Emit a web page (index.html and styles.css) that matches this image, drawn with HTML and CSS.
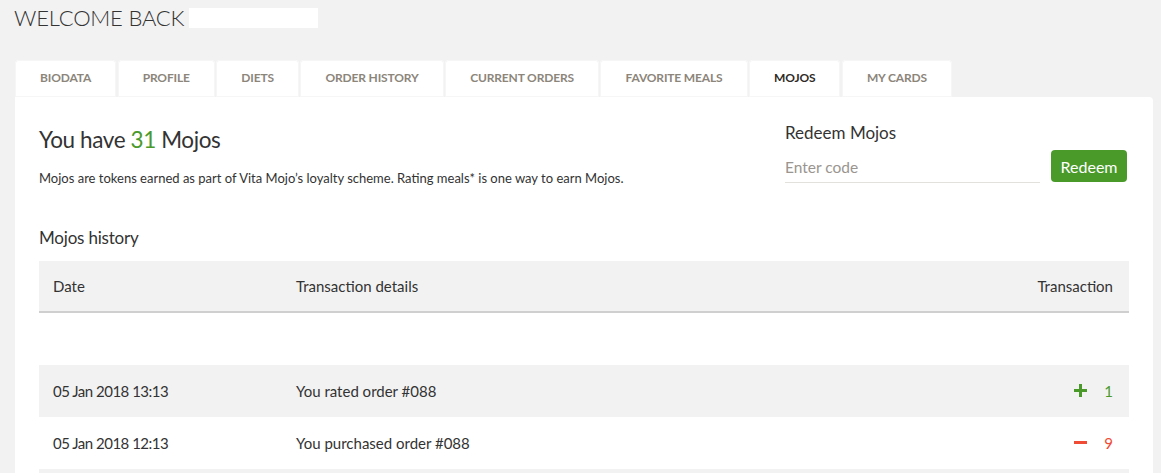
FILE: index.html
```html
<!DOCTYPE html>
<html lang="en">
<head>
<meta charset="utf-8">
<title>Mojos</title>
<link rel="stylesheet" href="styles.css">
</head>
<body>
<div class="page">
  <header class="welcome">
    <h1 class="welcome-title">WELCOME BACK</h1>
    <span class="welcome-name"></span>
  </header>
  <nav class="tabs">
    <a class="tab">BIODATA</a>
    <a class="tab">PROFILE</a>
    <a class="tab">DIETS</a>
    <a class="tab">ORDER HISTORY</a>
    <a class="tab">CURRENT ORDERS</a>
    <a class="tab">FAVORITE MEALS</a>
    <a class="tab tab-active">MOJOS</a>
    <a class="tab">MY CARDS</a>
  </nav>
  <main class="panel">
    <section class="summary">
      <div class="summary-left">
        <h2 class="balance">You have <span class="balance-num">31</span> Mojos</h2>
        <p class="desc">Mojos are tokens earned as part of Vita Mojo’s loyalty scheme. Rating meals* is one way to earn Mojos.</p>
      </div>
      <div class="redeem">
        <h3 class="redeem-title">Redeem Mojos</h3>
        <div class="redeem-row">
          <input class="redeem-input" type="text" placeholder="Enter code">
          <button class="redeem-btn">Redeem</button>
        </div>
      </div>
    </section>
    <h3 class="history-title">Mojos history</h3>
    <table class="history">
      <thead>
        <tr>
          <th class="col-date">Date</th>
          <th class="col-detail">Transaction details</th>
          <th class="col-amount">Transaction</th>
        </tr>
      </thead>
      <tbody>
        <tr class="row-empty"><td colspan="3"></td></tr>
        <tr class="row-alt">
          <td class="col-date">05 Jan 2018 13:13</td>
          <td>You rated order #088</td>
          <td class="col-amount"><span class="amt amt-plus"><svg class="sign" width="13" height="13" viewBox="0 0 13 13"><rect x="5" y="0" width="3" height="13" fill="#4a9a2a"/><rect x="0" y="5" width="13" height="3" fill="#4a9a2a"/></svg><span class="amt-num">1</span></span></td>
        </tr>
        <tr>
          <td class="col-date">05 Jan 2018 12:13</td>
          <td>You purchased order #088</td>
          <td class="col-amount"><span class="amt amt-minus"><svg class="sign" width="13" height="13" viewBox="0 0 13 13"><rect x="0" y="5" width="13" height="3" fill="#ef4b35"/></svg><span class="amt-num">9</span></span></td>
        </tr>
        <tr class="row-alt row-cut"><td colspan="3"></td></tr>
      </tbody>
    </table>
  </main>
</div>
</body>
</html>
```

FILE: styles.css
```css
html, body {
  margin: 0;
  padding: 0;
  background: #f2f2f2;
  height: 100%;
  overflow: hidden;
}
body {
  font-family: Lato, "Liberation Sans", sans-serif;
  color: #333;
}
.page {
  padding: 8px 8px 0 15px;
}
.welcome {
  display: flex;
  align-items: center;
  gap: 5px;
  height: 20px;
  margin-left: -1px;
}
.welcome-title {
  margin: 0;
  font-size: 22px;
  font-weight: 300;
  letter-spacing: -0.2px;
  line-height: 20px;
  color: #333;
}
.welcome-name {
  display: block;
  width: 129px;
  height: 20px;
  background: #fff;
}
.tabs {
  display: flex;
  gap: 1.5px;
  margin-top: 32px;
}
.tab {
  display: block;
  height: 37px;
  line-height: 36px;
  padding: 0 25px;
  background: #fff;
  border-radius: 4px 4px 0 0;
  font-size: 12px;
  font-weight: 700;
  color: #8c857a;
  letter-spacing: -0.15px;
  box-shadow: inset 0 0 0 1px #f6f6f6;
}
.tab-active {
  color: #2f2a26;
}
.panel {
  background: #fff;
  border-radius: 0 4px 0 0;
  padding: 24px 24px 0 24px;
  height: 352px;
}
.summary {
  display: flex;
  justify-content: space-between;
}
.balance {
  margin: 3px 0 0 0;
  font-size: 22.5px;
  font-weight: 400;
  line-height: 32px;
  letter-spacing: -0.4px;
  color: #333;
}
.balance-num {
  color: #4a9a2a;
}
.desc {
  margin: 14px 0 0 0;
  font-size: 13px;
  line-height: 16px;
  color: #333;
}
.redeem {
  width: 342px;
  margin-right: 2px;
}
.redeem-title {
  margin: 1px 0 0 0;
  font-size: 17px;
  font-weight: 400;
  line-height: 22px;
  color: #333;
}
.redeem-row {
  display: flex;
  justify-content: space-between;
  align-items: flex-end;
  margin-top: 6px;
}
.redeem-input {
  width: 255px;
  height: 31px;
  border: none;
  border-bottom: 1px solid #e3e1dc;
  padding: 0;
  margin: 0;
  font-family: inherit;
  font-size: 15.5px;
  color: #333;
  outline: none;
  background: transparent;
}
.redeem-input::placeholder {
  color: #9a958f;
}
.redeem-btn {
  width: 76px;
  height: 32px;
  border: none;
  border-radius: 4px;
  background: #4a9a2a;
  color: #fff;
  font-family: inherit;
  font-size: 16px;
  padding: 0;
  margin-bottom: 1px;
}
.history-title {
  margin: 41px 0 0 0;
  font-size: 17px;
  font-weight: 400;
  line-height: 22px;
  letter-spacing: -0.2px;
  color: #333;
}
.history {
  width: 100%;
  margin-top: 12px;
  border-collapse: collapse;
  font-size: 15px;
}
.history th {
  height: 50px;
  padding: 0 14px;
  background: #f2f2f2;
  border-bottom: 2px solid #cfcfcf;
  font-weight: 400;
  text-align: left;
  color: #333;
}
.history td {
  height: 52px;
  padding: 0 14px;
  color: #333;
}
.history td.col-date {
  letter-spacing: -0.5px;
}
.history th.col-amount, .history td.col-amount {
  text-align: right;
  padding-right: 16px;
}
.col-date {
  width: 215px;
}
.row-alt td {
  background: #f2f2f2;
}
.row-cut td {
  height: 10px;
}
.amt {
  display: inline-flex;
  align-items: center;
  gap: 17px;
}
.amt-plus {
  color: #4a9a2a;
}
.amt-minus {
  color: #ef4b35;
}
.sign {
  display: block;
}
```
